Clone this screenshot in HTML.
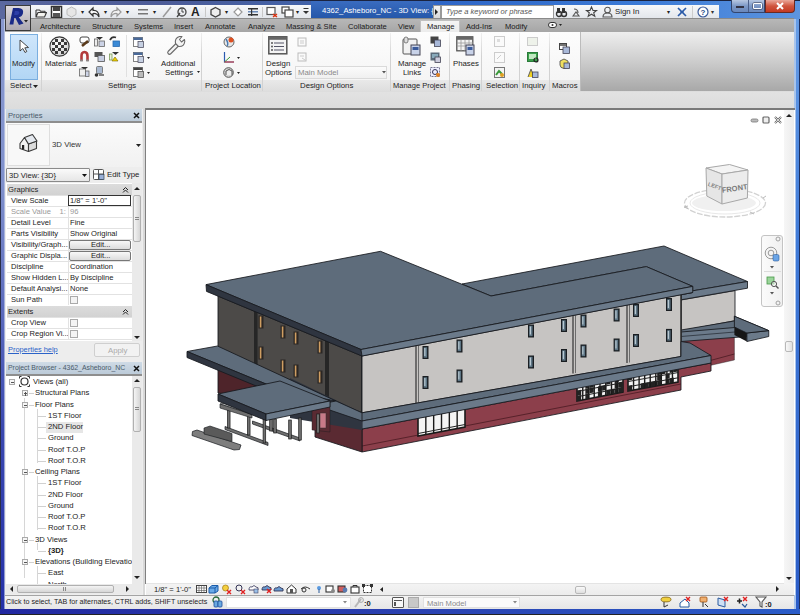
<!DOCTYPE html>
<html><head><meta charset="utf-8">
<style>
*{margin:0;padding:0;box-sizing:border-box}
html,body{width:800px;height:615px;overflow:hidden;background:#4a6aa8;font-family:"Liberation Sans",sans-serif;font-size:7.5px;color:#1e1e1e}
.a{position:absolute}
.t{position:absolute;white-space:nowrap;line-height:1}
svg{overflow:visible}
</style></head><body>
<div class="a" style="left:0px;top:0px;width:800px;height:615px;background:#4a6aa8"></div>
<div class="a" style="left:0px;top:0px;width:6px;height:615px;background:linear-gradient(180deg,#8a9ad0 0,#7f90cc 30%,#3a48b0 70%,#2430a8 100%)"></div>
<div class="a" style="left:0px;top:0px;width:1px;height:615px;background:#2a2f48"></div>
<div class="a" style="left:3.5px;top:19px;width:1.5px;height:590px;background:linear-gradient(180deg,#b8c4e4,#8c98d0)"></div>
<div class="a" style="left:794px;top:0px;width:6px;height:615px;background:linear-gradient(180deg,#6aa0e8 0,#3f7ad8 40%,#2a5cc8 100%)"></div>
<div class="a" style="left:794px;top:19px;width:1.5px;height:590px;background:#a8c4ec"></div>
<div class="a" style="left:799px;top:0px;width:1px;height:615px;background:#1e3060"></div>
<div class="a" style="left:0px;top:0px;width:800px;height:19px;background:linear-gradient(90deg,#5a68a0 0,#4d5c98 20%,#4262a8 38%,#2f66c6 55%,#3b7ad6 80%,#5d95e0 100%)"></div>
<div class="a" style="left:0px;top:0px;width:800px;height:1px;background:#1b2440"></div>
<div class="a" style="left:0px;top:609px;width:800px;height:6px;background:linear-gradient(90deg,#2228a0,#2a40b0 50%,#2a5cc8)"></div>
<div class="a" style="left:0px;top:614px;width:800px;height:1px;background:#222"></div>
<div class="a" style="left:31px;top:5px;width:280px;height:14px;background:linear-gradient(180deg,#f7f8fa,#e2e5ea)"></div>
<svg class="a" style="left:35px;top:7px;" width="12" height="12" viewBox="0 0 12 12"><path d="M1 3 h3.5 l1 1.2 h4.5 v2 M1 3 v7 h8.5 l2-4.5 h-8.5 l-2 4.5" fill="#f4f4f0" stroke="#3a3a3a" stroke-width="1.1" stroke-linejoin="round"/></svg>
<svg class="a" style="left:51px;top:6px;" width="11" height="12" viewBox="0 0 11 12"><rect x="0.5" y="0.5" width="10" height="11" fill="#fff" stroke="#333" stroke-width="1.5"/><rect x="2" y="1" width="7" height="4" fill="#444"/><rect x="2" y="7" width="7" height="4" fill="#555"/></svg>
<svg class="a" style="left:66px;top:6px;" width="11" height="12" viewBox="0 0 11 12"><path d="M5.5 1 L10 3.5 V8.5 L5.5 11 L1 8.5 V3.5Z" fill="#e6e6e6" stroke="#bbb"/></svg>
<div class="t" style="left:81px;top:9px;font-size:6px;color:#222">▾</div>
<svg class="a" style="left:88px;top:6px;" width="12" height="12" viewBox="0 0 12 12"><path d="M5 2 L1 6 L5 10 V7.5 Q9 7 11 11 Q11 4 5 4.5Z" fill="#fff" stroke="#333" stroke-width="1.2"/></svg>
<div class="t" style="left:104px;top:9px;font-size:6px;color:#222">▾</div>
<svg class="a" style="left:110px;top:6px;" width="12" height="12" viewBox="0 0 12 12"><path d="M7 2 L11 6 L7 10 V7.5 Q3 7 1 11 Q1 4 7 4.5Z" fill="#f4f4f4" stroke="#999" stroke-width="1.2"/></svg>
<div class="t" style="left:126px;top:9px;font-size:6px;color:#222">▾</div>
<svg class="a" style="left:137px;top:7px;" width="12" height="10" viewBox="0 0 12 10"><rect x="1" y="2" width="10" height="1.5" fill="#777"/><rect x="1" y="6" width="10" height="1.5" fill="#777"/></svg>
<div class="t" style="left:153px;top:9px;font-size:6px;color:#222">▾</div>
<svg class="a" style="left:162px;top:6px;" width="10" height="12" viewBox="0 0 10 12"><path d="M1 11 L9 1" stroke="#999" stroke-width="1.5"/></svg>
<svg class="a" style="left:176px;top:6px;" width="11" height="12" viewBox="0 0 11 12"><circle cx="6" cy="6" r="4" fill="none" stroke="#444" stroke-width="1.3"/><path d="M6 3 v3 h2" stroke="#444" fill="none"/><path d="M1 11 L4 7" stroke="#444" stroke-width="1.3"/></svg>
<div class="t" style="left:191px;top:6px;font-size:12px;font-weight:bold;color:#222">A</div>
<div class="a" style="left:205px;top:7px;width:1px;height:10px;background:#c8c8c8"></div>
<svg class="a" style="left:210px;top:6px;" width="11" height="12" viewBox="0 0 11 12"><path d="M5.5 1.5 L10 4 V8.5 L5.5 11 L1 8.5 V4Z" fill="#eee" stroke="#444" stroke-width="1.3"/></svg>
<div class="t" style="left:225px;top:9px;font-size:6px;color:#222">▾</div>
<svg class="a" style="left:233px;top:6px;" width="10" height="12" viewBox="0 0 10 12"><path d="M5 2 L9 6 L5 10 L1 6Z" fill="#fff" stroke="#999" stroke-width="1.2"/></svg>
<svg class="a" style="left:247px;top:6px;" width="12" height="12" viewBox="0 0 12 12"><rect x="1" y="2" width="10" height="1.5" fill="#333"/><rect x="1" y="5" width="10" height="1.5" fill="#6a8ab8"/><rect x="1" y="8" width="10" height="1.5" fill="#333"/><rect x="4" y="2" width="1.2" height="8" fill="#333"/></svg>
<div class="a" style="left:262px;top:7px;width:1px;height:10px;background:#c8c8c8"></div>
<svg class="a" style="left:266px;top:6px;" width="12" height="12" viewBox="0 0 12 12"><rect x="1" y="1.5" width="8" height="7" fill="#fff" stroke="#555" stroke-width="1.2"/><path d="M7 8 L11 11 M11 8 L7 11" stroke="#d31" stroke-width="1.5"/></svg>
<svg class="a" style="left:281px;top:6px;" width="13" height="12" viewBox="0 0 13 12"><rect x="1" y="1" width="7" height="6" fill="#fff" stroke="#444" stroke-width="1.2"/><rect x="4" y="4" width="8" height="7" fill="#fff" stroke="#444" stroke-width="1.2"/></svg>
<div class="t" style="left:296px;top:9px;font-size:6px;color:#222">▾</div>
<svg class="a" style="left:303px;top:8px;" width="7" height="8" viewBox="0 0 7 8"><rect x="0.5" y="0" width="5" height="1" fill="#333"/><path d="M0 3 h6 l-3 3z" fill="#333"/></svg>
<div class="a" style="left:311px;top:1px;width:123px;height:18px;background:linear-gradient(180deg,#3a6cc0,#2456a8)"></div>
<div class="t" style="left:322px;top:7px;color:#fff;font-size:7.7px">4362_Asheboro_NC - 3D View: {...</div>
<div class="a" style="left:433px;top:5px;width:8px;height:14px;background:linear-gradient(180deg,#f4f4f4,#d8d8d8);border:1px solid #999"></div>
<svg class="a" style="left:435px;top:9px;" width="4" height="6" viewBox="0 0 4 6"><path d="M0 0 L3 3 L0 6z" fill="#222"/></svg>
<div class="a" style="left:441px;top:5px;width:113px;height:14px;background:#fff;border:1px solid #9a9a9a"></div>
<div class="t" style="left:446px;top:8px;color:#555;font-style:italic;font-size:7.5px">Type a keyword or phrase</div>
<div class="a" style="left:554px;top:5px;width:165px;height:14px;background:linear-gradient(180deg,#f7f8fa,#e2e5ea)"></div>
<svg class="a" style="left:556px;top:7px;" width="11" height="10" viewBox="0 0 11 10"><circle cx="3" cy="7" r="2.5" fill="none" stroke="#333" stroke-width="1.4"/><circle cx="8" cy="7" r="2.5" fill="none" stroke="#333" stroke-width="1.4"/><rect x="1" y="1" width="3" height="5" fill="#333"/><rect x="6" y="1" width="3" height="5" fill="#333"/></svg>
<svg class="a" style="left:571px;top:6px;" width="10" height="12" viewBox="0 0 10 12"><path d="M2 10 L5 6 L8 10Z M3 3 Q7 3 7 7" fill="none" stroke="#555" stroke-width="1.1"/></svg>
<svg class="a" style="left:586px;top:6px;" width="11" height="11" viewBox="0 0 11 11"><path d="M5.5 1 L7 4.5 L10.5 4.5 L7.7 6.8 L8.8 10.2 L5.5 8.2 L2.2 10.2 L3.3 6.8 L0.5 4.5 L4 4.5Z" fill="none" stroke="#444" stroke-width="1.1"/></svg>
<svg class="a" style="left:602px;top:6px;" width="11" height="12" viewBox="0 0 11 12"><circle cx="5.5" cy="4" r="2.8" fill="none" stroke="#555" stroke-width="1.1"/><path d="M1 11 Q1 7 5.5 7 Q10 7 10 11Z" fill="none" stroke="#555" stroke-width="1.1"/></svg>
<div class="t" style="left:615px;top:8px;font-size:7.8px;color:#222">Sign In</div>
<div class="t" style="left:667px;top:9px;font-size:6px;color:#222">▾</div>
<svg class="a" style="left:677px;top:7px;" width="10" height="10" viewBox="0 0 10 10"><path d="M1 1 Q5 5 9 9 M9 1 Q5 5 1 9" stroke="#2a5aa8" stroke-width="1.7" fill="none"/><path d="M3 5 h4" stroke="#2a5aa8" stroke-width="1"/></svg>
<div class="a" style="left:692px;top:6px;width:1px;height:12px;background:#ccc"></div>
<svg class="a" style="left:697px;top:6px;" width="12" height="12" viewBox="0 0 12 12"><circle cx="6" cy="6" r="5" fill="#fff" stroke="#3a5a9a" stroke-width="1.2"/><text x="6" y="9" font-size="8" font-family="Liberation Sans" font-weight="bold" text-anchor="middle" fill="#2a4a8a">?</text></svg>
<div class="t" style="left:711px;top:9px;font-size:6px;color:#333">▾</div>
<div class="a" style="left:731px;top:0px;width:34px;height:13px;border:1px solid #34466e;border-top:0;border-radius:0 0 0 4px;background:linear-gradient(180deg,#b8c8e2,#7c98c6 50%,#6a88bc)"></div>
<div class="a" style="left:748px;top:0px;width:1px;height:12px;background:#4a5e88"></div>
<div class="a" style="left:736px;top:6px;width:8px;height:2px;background:#fff;border:0.5px solid #334"></div>
<div class="a" style="left:753px;top:3px;width:9px;height:6px;border:1.5px solid #fff;border-radius:1px;box-shadow:0 0 0 0.5px #334"></div>
<div class="a" style="left:765px;top:0px;width:30px;height:13px;border:1px solid #6a2a22;border-top:0;border-radius:0 0 4px 0;background:linear-gradient(180deg,#eaa89a,#d0553e 50%,#c23a22)"></div>
<svg class="a" style="left:776px;top:2px;" width="8" height="8" viewBox="0 0 8 8"><path d="M1 1 L7 7 M7 1 L1 7" stroke="#fff" stroke-width="2"/></svg>
<div class="a" style="left:5px;top:18px;width:789px;height:14px;background:linear-gradient(180deg,#b9b9b9,#a6a6a6)"></div>
<div class="a" style="left:31px;top:18px;width:763px;height:1px;background:#8a8a8a"></div>
<div class="a" style="left:420px;top:20px;width:40px;height:12px;background:linear-gradient(180deg,#f4f4f4,#ececec);border:1px solid #c0c0c0;border-bottom:0"></div>
<div class="t" style="left:40px;top:23px;font-size:7.6px;color:#1a1a1a">Architecture</div>
<div class="t" style="left:92px;top:23px;font-size:7.6px;color:#1a1a1a">Structure</div>
<div class="t" style="left:134px;top:23px;font-size:7.6px;color:#1a1a1a">Systems</div>
<div class="t" style="left:174px;top:23px;font-size:7.6px;color:#1a1a1a">Insert</div>
<div class="t" style="left:205px;top:23px;font-size:7.6px;color:#1a1a1a">Annotate</div>
<div class="t" style="left:248px;top:23px;font-size:7.6px;color:#1a1a1a">Analyze</div>
<div class="t" style="left:286px;top:23px;font-size:7.6px;color:#1a1a1a">Massing &amp; Site</div>
<div class="t" style="left:348px;top:23px;font-size:7.6px;color:#1a1a1a">Collaborate</div>
<div class="t" style="left:398px;top:23px;font-size:7.6px;color:#1a1a1a">View</div>
<div class="t" style="left:427px;top:23px;font-size:7.6px;color:#1a1a1a">Manage</div>
<div class="t" style="left:466px;top:23px;font-size:7.6px;color:#1a1a1a">Add-Ins</div>
<div class="t" style="left:505px;top:23px;font-size:7.6px;color:#1a1a1a">Modify</div>
<div class="a" style="left:5px;top:5px;width:26px;height:26px;background:linear-gradient(180deg,#dcd8dc,#aca8b0);border:1px solid #3a3a3a"></div>
<svg class="a" style="left:6.5px;top:6px;" width="22" height="22" viewBox="0 0 22 22"><path d="M2.5 18.5 L6 2 L11.5 2 Q17 2.3 16 7.2 Q15.2 10.5 11.8 11.2 L16.5 17.5 L12 19 L8.4 12 L7.3 12 L6.4 18.5 Z" fill="#1a2a88"/><path d="M7.8 5 L7.2 9 L10 9 Q12.3 8.6 12.4 6.8 Q12.4 5 10.5 5Z" fill="#2d3fa8"/><path d="M17 14 h4 l-2 2.5z" fill="#222"/></svg>
<svg class="a" style="left:548px;top:22px;" width="14" height="7" viewBox="0 0 14 7"><rect x="0.5" y="0.5" width="8" height="5" rx="2.5" fill="#fff" stroke="#333"/><circle cx="4.5" cy="3" r="1" fill="#333"/><path d="M11 2 h3 l-1.5 2z" fill="#222"/></svg>
<div class="a" style="left:5px;top:32px;width:575px;height:59px;background:linear-gradient(180deg,#fdfdfd,#f3f3f3)"></div>
<div class="a" style="left:5px;top:80px;width:575px;height:11px;background:linear-gradient(180deg,#e9e9e9,#dedede)"></div>
<div class="a" style="left:5px;top:91px;width:575px;height:1px;background:#c4c4c4"></div>
<div class="a" style="left:580px;top:32px;width:214px;height:59px;background:linear-gradient(180deg,#eeeeee,#d0d0d0 45%,#a8a8a8)"></div>
<div class="a" style="left:580px;top:32px;width:1px;height:59px;background:#bcbcbc"></div>
<div class="a" style="left:41px;top:33px;width:1px;height:58px;background:linear-gradient(180deg,#f0f0f0,#d2d2d2 40%,#d2d2d2)"></div>
<div class="a" style="left:201px;top:33px;width:1px;height:58px;background:linear-gradient(180deg,#f0f0f0,#d2d2d2 40%,#d2d2d2)"></div>
<div class="a" style="left:262px;top:33px;width:1px;height:58px;background:linear-gradient(180deg,#f0f0f0,#d2d2d2 40%,#d2d2d2)"></div>
<div class="a" style="left:390px;top:33px;width:1px;height:58px;background:linear-gradient(180deg,#f0f0f0,#d2d2d2 40%,#d2d2d2)"></div>
<div class="a" style="left:449px;top:33px;width:1px;height:58px;background:linear-gradient(180deg,#f0f0f0,#d2d2d2 40%,#d2d2d2)"></div>
<div class="a" style="left:481px;top:33px;width:1px;height:58px;background:linear-gradient(180deg,#f0f0f0,#d2d2d2 40%,#d2d2d2)"></div>
<div class="a" style="left:519px;top:33px;width:1px;height:58px;background:linear-gradient(180deg,#f0f0f0,#d2d2d2 40%,#d2d2d2)"></div>
<div class="a" style="left:549px;top:33px;width:1px;height:58px;background:linear-gradient(180deg,#f0f0f0,#d2d2d2 40%,#d2d2d2)"></div>
<div class="a" style="left:10px;top:34px;width:28px;height:46px;background:linear-gradient(180deg,#cfe6fb,#b2d6f5);border:1px solid #7aaedf"></div>
<svg class="a" style="left:19px;top:39px;" width="10" height="14" viewBox="0 0 10 14"><path d="M1 1 L1 12 L3.8 9.5 L6 13.5 L7.8 12.5 L5.8 8.8 L9.5 8.5Z" fill="#fff" stroke="#333" stroke-width="0.9"/></svg>
<div class="t" style="left:12px;top:60px;font-size:7.8px;color:#222">Modify</div>
<div class="t" style="left:10px;top:82px;font-size:7.8px;color:#222">Select</div>
<svg class="a" style="left:33px;top:85px;" width="6" height="3" viewBox="0 0 6 3"><path d="M0 0 h5 l-2.5 3z" fill="#222"/></svg>
<svg class="a" style="left:49px;top:36px;" width="21" height="21" viewBox="0 0 21 21"><defs><radialGradient id="sg" cx="0.4" cy="0.35" r="0.7"><stop offset="0" stop-color="#fff"/><stop offset="1" stop-color="#cfcfcf"/></radialGradient></defs><circle cx="10.5" cy="10.5" r="9.6" fill="url(#sg)" stroke="#333" stroke-width="1.1"/><g fill="#3a3a3a"><rect x="6" y="3" width="3" height="3"/><rect x="12" y="3" width="3" height="3"/><rect x="3" y="6" width="3" height="3"/><rect x="9" y="6" width="3" height="3"/><rect x="15" y="6" width="3" height="3"/><rect x="6" y="9" width="3" height="3"/><rect x="12" y="9" width="3" height="3"/><rect x="3" y="12" width="3" height="3"/><rect x="9" y="12" width="3" height="3"/><rect x="15" y="12" width="3" height="3"/><rect x="6" y="15" width="3" height="3"/><rect x="12" y="15" width="3" height="3"/></g></svg>
<div class="t" style="left:45px;top:60px;font-size:7.8px;color:#222">Materials</div>
<svg class="a" style="left:79px;top:36px;" width="11" height="11" viewBox="0 0 11 11"><rect x="1" y="1" width="9" height="6" rx="2" fill="#fff" stroke="#444"/><path d="M3 10 L9 5" stroke="#5a3a1a" stroke-width="2.5"/></svg>
<svg class="a" style="left:94px;top:36px;" width="11" height="11" viewBox="0 0 11 11"><path d="M2 1 h7 l-3.5 3z" fill="#333"/><rect x="0.5" y="3" width="3" height="7" fill="#eee" stroke="#666" stroke-width="0.8"/><rect x="5" y="5" width="5.5" height="5.5" fill="#ccd3e6" stroke="#666" stroke-width="0.8"/></svg>
<svg class="a" style="left:109px;top:36px;" width="11" height="11" viewBox="0 0 11 11"><path d="M1 4 Q3 0 7 1.5" stroke="#333" stroke-width="1.8" fill="none"/><rect x="4" y="5" width="6.5" height="5.5" fill="#3b8ad6" stroke="#2a6ab0" stroke-width="0.8"/></svg>
<svg class="a" style="left:79px;top:51px;" width="11" height="11" viewBox="0 0 11 11"><path d="M2.5 10 V5 Q2.5 1 5.5 1 Q8.5 1 8.5 5 V10" stroke="#b33a3a" stroke-width="2.6" fill="none"/><rect x="1.2" y="8.5" width="2.6" height="2" fill="#888"/><rect x="7.2" y="8.5" width="2.6" height="2" fill="#888"/></svg>
<svg class="a" style="left:94px;top:51px;" width="11" height="11" viewBox="0 0 11 11"><rect x="0.5" y="1" width="8" height="5" fill="#555"/><rect x="4" y="4.5" width="6.5" height="6" fill="#c8cfe2" stroke="#555" stroke-width="0.8"/></svg>
<svg class="a" style="left:109px;top:51px;" width="11" height="11" viewBox="0 0 11 11"><path d="M3 1 h7 l-3.5 3z" fill="#333"/><rect x="0.5" y="3" width="2.5" height="6" fill="#e8f0d8" stroke="#7a9a5a" stroke-width="0.8"/><path d="M6 6 L9 10 H3Z" fill="#f0d000" stroke="#776600" stroke-width="0.6"/></svg>
<svg class="a" style="left:79px;top:66px;" width="11" height="11" viewBox="0 0 11 11"><path d="M2 1 h7 l-3.5 3z" fill="#333"/><rect x="0.5" y="3" width="6" height="7" fill="#eee" stroke="#666" stroke-width="0.8"/><rect x="6.5" y="5" width="3.5" height="5.5" fill="#ccd3e6" stroke="#666" stroke-width="0.8"/></svg>
<svg class="a" style="left:94px;top:66px;" width="11" height="11" viewBox="0 0 11 11"><rect x="2.5" y="0.5" width="6" height="7" rx="1" fill="#a8b8d0" stroke="#666" stroke-width="0.8"/><circle cx="2.5" cy="9" r="1.8" fill="#333"/><path d="M5 9 h5" stroke="#333" stroke-width="1.2"/></svg>
<div class="a" style="left:126px;top:35px;width:1px;height:42px;background:#e0e0e0"></div>
<svg class="a" style="left:133px;top:37px;" width="11" height="11" viewBox="0 0 11 11"><rect x="0.5" y="0.5" width="9" height="9" fill="#fff" stroke="#666" stroke-width="0.8"/><rect x="0.5" y="0.5" width="9" height="2.5" fill="#4a6a9a"/><rect x="5" y="4.5" width="5.5" height="6" fill="#c6d0e2" stroke="#556" stroke-width="0.8"/></svg>
<svg class="a" style="left:133px;top:52px;" width="11" height="11" viewBox="0 0 11 11"><rect x="0.5" y="0.5" width="9" height="9" fill="#fff" stroke="#666" stroke-width="0.8"/><rect x="0.5" y="0.5" width="9" height="2.5" fill="#4a6a9a"/><rect x="5" y="4.5" width="5.5" height="6" fill="#c6d0e2" stroke="#556" stroke-width="0.8"/></svg>
<svg class="a" style="left:133px;top:67px;" width="11" height="11" viewBox="0 0 11 11"><rect x="0.5" y="0.5" width="9" height="9" fill="#fff" stroke="#666" stroke-width="0.8"/><rect x="0.5" y="0.5" width="9" height="2.5" fill="#444"/><rect x="5" y="4.5" width="5.5" height="6" fill="#bbb" stroke="#555" stroke-width="0.8"/></svg>
<svg class="a" style="left:147px;top:57px;" width="4" height="3" viewBox="0 0 4 3"><path d="M0 0 h3 l-1.5 2z" fill="#222"/></svg>
<svg class="a" style="left:147px;top:72px;" width="4" height="3" viewBox="0 0 4 3"><path d="M0 0 h3 l-1.5 2z" fill="#222"/></svg>
<svg class="a" style="left:166px;top:35px;" width="22" height="21" viewBox="0 0 22 21"><g fill="none" stroke-linecap="round" stroke-linejoin="round"><path d="M3.5 17.5 L11.5 9.5" stroke="#6a6a6a" stroke-width="4.6"/><path d="M3.5 17.5 L11.5 9.5" stroke="#f4f4f4" stroke-width="2.4"/></g><path d="M9.5 8.5 Q8.5 3 13.5 1.5 L16 1.5 L13.5 4.5 L15.5 7 L18.5 4.5 L18.8 6.5 Q18 12 12.5 11.5 Z" fill="#f4f4f4" stroke="#6a6a6a" stroke-width="1.1" stroke-linejoin="round"/></svg>
<div class="t" style="left:161px;top:60px;font-size:7.8px;color:#222">Additional</div>
<div class="t" style="left:165px;top:69px;font-size:7.8px;color:#222">Settings</div>
<svg class="a" style="left:197px;top:71px;" width="4" height="3" viewBox="0 0 4 3"><path d="M0 0 h3 l-1.5 2z" fill="#222"/></svg>
<div class="t" style="left:108px;top:82px;font-size:7.8px;color:#222">Settings</div>
<svg class="a" style="left:223px;top:36px;" width="12" height="12" viewBox="0 0 12 12"><circle cx="6" cy="6" r="5" fill="#e8e8e8" stroke="#666" stroke-width="1"/><path d="M3 3 Q6 8 4 10" stroke="#4a7ab0" stroke-width="1.5" fill="none"/><circle cx="8" cy="4" r="2.5" fill="#e05020"/></svg>
<svg class="a" style="left:223px;top:52px;" width="12" height="11" viewBox="0 0 12 11"><path d="M1.5 0 V10 H11" stroke="#2a5ab0" stroke-width="1.2" fill="none"/><path d="M1.5 10 L7 5" stroke="#3a9a3a" stroke-width="1"/><path d="M1.5 10 H11" stroke="#d03030" stroke-width="1"/></svg>
<svg class="a" style="left:223px;top:67px;" width="12" height="11" viewBox="0 0 12 11"><circle cx="5.5" cy="5.5" r="4.8" fill="#d8d8d8" stroke="#555" stroke-width="1"/><path d="M3 8 L3 4 Q6 1 9 4 L9 8" stroke="#555" fill="#eee"/></svg>
<svg class="a" style="left:237px;top:57px;" width="4" height="3" viewBox="0 0 4 3"><path d="M0 0 h3 l-1.5 2z" fill="#222"/></svg>
<svg class="a" style="left:237px;top:72px;" width="4" height="3" viewBox="0 0 4 3"><path d="M0 0 h3 l-1.5 2z" fill="#222"/></svg>
<div class="t" style="left:205px;top:82px;font-size:7.8px;color:#222">Project Location</div>
<svg class="a" style="left:268px;top:36px;" width="20" height="19" viewBox="0 0 20 19"><rect x="0.8" y="0.8" width="18" height="17" fill="#f4f4f4" stroke="#555" stroke-width="1.5"/><rect x="0.8" y="0.8" width="18" height="3" fill="#666"/><circle cx="4" cy="7" r="1" fill="#555"/><circle cx="4" cy="10.5" r="1" fill="#555"/><circle cx="4" cy="14" r="1" fill="#555"/><path d="M6 7 H16 M6 10.5 H16 M6 14 H16" stroke="#556" stroke-width="1.2"/></svg>
<div class="t" style="left:266px;top:60px;font-size:7.8px;color:#222">Design</div>
<div class="t" style="left:265px;top:69px;font-size:7.8px;color:#222">Options</div>
<svg class="a" style="left:297px;top:37px;" width="10" height="10" viewBox="0 0 10 10"><rect x="1" y="1" width="8" height="8" fill="#fafafa" stroke="#bbb"/><path d="M3 4 h4 M3 6 h4" stroke="#ccc"/></svg>
<svg class="a" style="left:297px;top:52px;" width="10" height="10" viewBox="0 0 10 10"><rect x="1" y="1" width="8" height="8" fill="#fafafa" stroke="#bbb"/><path d="M3 4 h4 M5 6 L8 8" stroke="#ccc"/></svg>
<div class="a" style="left:295px;top:66px;width:92px;height:13px;background:linear-gradient(180deg,#fbfbfb,#f0f0f0);border:1px solid #dadada"></div>
<div class="t" style="left:298px;top:69px;font-size:7.8px;color:#8a8a8a">Main Model</div>
<svg class="a" style="left:382px;top:71px;" width="4" height="3" viewBox="0 0 4 3"><path d="M0 0 h4 l-2 2.5z" fill="#555"/></svg>
<div class="t" style="left:300px;top:82px;font-size:7.8px;color:#222">Design Options</div>
<svg class="a" style="left:401px;top:36px;" width="22" height="20" viewBox="0 0 22 20"><rect x="2" y="3" width="14" height="15" rx="1" fill="#f2f2f2" stroke="#555" stroke-width="1"/><rect x="3" y="1" width="4" height="6" rx="2" fill="#ddd" stroke="#666" stroke-width="0.8"/><rect x="10" y="9" width="9" height="10" fill="#c8d2e8" stroke="#445" stroke-width="1"/><rect x="11.5" y="11" width="6" height="3" fill="#3a5a9a"/></svg>
<div class="t" style="left:398px;top:60px;font-size:7.8px;color:#222">Manage</div>
<div class="t" style="left:403px;top:69px;font-size:7.8px;color:#222">Links</div>
<svg class="a" style="left:430px;top:36px;" width="11" height="11" viewBox="0 0 11 11"><rect x="0.5" y="0.5" width="8" height="7" fill="#444"/><rect x="4.5" y="4" width="6" height="6.5" fill="#a8b8d8" stroke="#445" stroke-width="0.8"/></svg>
<svg class="a" style="left:430px;top:52px;" width="11" height="11" viewBox="0 0 11 11"><rect x="0.5" y="0.5" width="9" height="8" fill="#5a6a7a"/><rect x="2" y="2" width="6" height="4" fill="#8ab"/><rect x="5" y="5" width="5.5" height="5.5" fill="#ccd" stroke="#445" stroke-width="0.8"/></svg>
<svg class="a" style="left:430px;top:67px;" width="11" height="11" viewBox="0 0 11 11"><rect x="0.5" y="0.5" width="9" height="9" fill="#eef" stroke="#557" stroke-width="0.8" stroke-dasharray="2 1"/><circle cx="5" cy="5" r="2.5" fill="none" stroke="#335"/><circle cx="8" cy="8" r="2" fill="#e08020"/></svg>
<div class="t" style="left:393px;top:82px;font-size:7.5px;color:#222">Manage Project</div>
<svg class="a" style="left:456px;top:36px;" width="20" height="20" viewBox="0 0 20 20"><rect x="0.8" y="0.8" width="16" height="14" fill="#f4f4f4" stroke="#555" stroke-width="1.3"/><rect x="0.8" y="0.8" width="16" height="3" fill="#666"/><path d="M1 7 H17 M1 10 H17 M5 4 V15 M9 4 V15 M13 4 V15" stroke="#999" stroke-width="0.8"/><rect x="10" y="9" width="8" height="10" fill="#c8d2e8" stroke="#445" stroke-width="1"/><rect x="11.5" y="11" width="5" height="3" fill="#3a5a9a"/></svg>
<div class="t" style="left:453px;top:60px;font-size:7.8px;color:#222">Phases</div>
<div class="t" style="left:452px;top:82px;font-size:7.8px;color:#222">Phasing</div>
<svg class="a" style="left:494px;top:36px;" width="11" height="11" viewBox="0 0 11 11"><rect x="0.5" y="0.5" width="10" height="10" fill="#fafafa" stroke="#ccc"/><path d="M3 3 h3 v3 h-3z" fill="#ddd"/></svg>
<svg class="a" style="left:494px;top:52px;" width="11" height="11" viewBox="0 0 11 11"><rect x="0.5" y="0.5" width="10" height="10" fill="#fafafa" stroke="#ccc"/><path d="M3 7 L7 3" stroke="#ccc"/></svg>
<svg class="a" style="left:494px;top:67px;" width="11" height="11" viewBox="0 0 11 11"><rect x="0.5" y="0.5" width="10" height="10" fill="#f4f4f4" stroke="#777"/><path d="M2 8 L5 4 L8 7" stroke="#3a9a3a" stroke-width="2" fill="none"/><circle cx="8" cy="8" r="2" fill="#e0a020"/></svg>
<div class="t" style="left:486px;top:82px;font-size:7.8px;color:#222">Selection</div>
<svg class="a" style="left:527px;top:36px;" width="11" height="11" viewBox="0 0 11 11"><rect x="0.5" y="1.5" width="10" height="8" fill="#eef2ea" stroke="#ccc"/></svg>
<svg class="a" style="left:527px;top:52px;" width="12" height="11" viewBox="0 0 12 11"><rect x="0.5" y="0.5" width="10" height="9" fill="#3aa04a" stroke="#2a7a3a"/><rect x="2" y="2" width="7" height="5" fill="#bfe8c0"/><circle cx="9" cy="8" r="2" fill="none" stroke="#222" stroke-width="1.2"/></svg>
<svg class="a" style="left:527px;top:67px;" width="12" height="11" viewBox="0 0 12 11"><path d="M1 10 L4 2 L7 10" fill="#f0d020" stroke="#555" stroke-width="0.9"/><rect x="5.5" y="5" width="5.5" height="5.5" fill="#a8b8d8" stroke="#445" stroke-width="0.8"/></svg>
<div class="t" style="left:522px;top:82px;font-size:7.8px;color:#222">Inquiry</div>
<svg class="a" style="left:559px;top:43px;" width="11" height="11" viewBox="0 0 11 11"><rect x="0.5" y="0.5" width="7" height="6" fill="#fff" stroke="#444"/><path d="M1 2 h6" stroke="#444" stroke-width="1.5"/><rect x="4" y="4" width="6.5" height="6.5" fill="#a8b8d8" stroke="#445" stroke-width="0.8"/></svg>
<svg class="a" style="left:559px;top:58px;" width="11" height="11" viewBox="0 0 11 11"><path d="M5 1 L9 3 V7 Q9 10 5 10.5 Q1 10 1 7 V3Z" fill="#f0e060" stroke="#555" stroke-width="0.9"/><rect x="5" y="5" width="5.5" height="5.5" fill="#a8b8d8" stroke="#445" stroke-width="0.8"/></svg>
<div class="t" style="left:552px;top:82px;font-size:7.8px;color:#222">Macros</div>
<div class="a" style="left:5px;top:91px;width:789px;height:18px;background:linear-gradient(180deg,#d8d8d8 0,#e2e2e2 1px,#dcdcdc)"></div>
<div class="a" style="left:5px;top:109px;width:139px;height:486px;background:#ededed"></div>
<div class="a" style="left:143px;top:109px;width:2px;height:486px;background:#d8d8d8"></div>
<div class="a" style="left:6px;top:109px;width:136px;height:12px;background:linear-gradient(180deg,#cfdbe6,#bccbd9)"></div>
<div class="t" style="left:8px;top:112px;font-size:7.6px;color:#4a5a6a">Properties</div>
<svg class="a" style="left:133px;top:112px;" width="7" height="7" viewBox="0 0 7 7"><path d="M1 1 L6 6 M6 1 L1 6" stroke="#111" stroke-width="1.5"/></svg>
<div class="a" style="left:6px;top:121px;width:136px;height:2px;background:#8e8e8e"></div>
<div class="a" style="left:6px;top:123px;width:136px;height:44px;background:linear-gradient(180deg,#fbfbfb,#f1f1f1)"></div>
<div class="a" style="left:7px;top:124px;width:43px;height:42px;background:#f8f8f8;border:1px solid #dedede"></div>
<svg class="a" style="left:18px;top:133px;" width="21" height="21" viewBox="0 0 21 21"><g stroke="#3a3a3a" stroke-width="1.1" stroke-linejoin="round"><path d="M2 10.5 L6.5 4.5 L10.5 11 L10.5 18.5 L2 15.5 Z" fill="#f2f2f2"/><path d="M10.5 11 L18.5 8 L18.5 15.5 L10.5 18.5 Z" fill="#dcdcdc"/><path d="M6.5 4.5 L14.5 1.5 L19 8 L10.5 11 Z" fill="#e4e8ee"/></g><rect x="4" y="12" width="2.2" height="4.5" fill="#222"/></svg>
<div class="t" style="left:52px;top:141px;font-size:7.8px;color:#333">3D View</div>
<svg class="a" style="left:136px;top:144px;" width="5" height="3" viewBox="0 0 5 3"><path d="M0 0 h5 l-2.5 3z" fill="#222"/></svg>
<div class="a" style="left:6px;top:168px;width:84px;height:14px;background:linear-gradient(180deg,#fafafa,#e6e6e6);border:1px solid #8a8a8a;border-radius:1px"></div>
<div class="t" style="left:9px;top:172px;font-size:7.6px;color:#222">3D View: {3D}</div>
<svg class="a" style="left:82px;top:174px;" width="5" height="3" viewBox="0 0 5 3"><path d="M0 0 h5 l-2.5 3z" fill="#111"/></svg>
<svg class="a" style="left:93px;top:169px;" width="12" height="12" viewBox="0 0 12 12"><rect x="0.5" y="0.5" width="10" height="10" rx="1" fill="#fff" stroke="#555"/><path d="M5.5 0.5 V10.5 M0.5 5 H10.5" stroke="#555"/><rect x="6" y="5.5" width="5" height="5" fill="#9ab0d8" stroke="#345" stroke-width="0.7"/></svg>
<div class="t" style="left:107px;top:171px;font-size:7.8px;color:#222">Edit Type</div>
<div class="a" style="left:6px;top:183px;width:126px;height:158px;background:#fff"></div>
<div class="a" style="left:7px;top:184px;width:125px;height:11px;background:linear-gradient(180deg,#dcdcdc,#d2d2d2)"></div>
<div class="t" style="left:8px;top:186px;font-size:7.6px;color:#222">Graphics</div>
<svg class="a" style="left:123px;top:187px;" width="5" height="6" viewBox="0 0 5 6"><path d="M0 3 L2.5 0.5 L5 3 M0 5.5 L2.5 3 L5 5.5" stroke="#222" stroke-width="1" fill="none"/></svg>
<div class="a" style="left:7px;top:195px;width:125px;height:1px;background:#e2e2e2"></div>
<div class="t" style="left:11px;top:197px;font-size:7.6px;color:#222">View Scale</div>
<div class="a" style="left:68px;top:195px;width:1px;height:11px;background:#e2e2e2"></div>
<div class="t" style="left:70px;top:197px;font-size:7.6px;color:#222">1/8&quot; = 1'-0&quot;</div>
<div class="a" style="left:7px;top:206px;width:125px;height:1px;background:#e2e2e2"></div>
<div class="t" style="left:11px;top:208px;font-size:7.6px;color:#999">Scale Value &nbsp;&nbsp; 1:</div>
<div class="a" style="left:68px;top:206px;width:1px;height:11px;background:#e2e2e2"></div>
<div class="t" style="left:70px;top:208px;font-size:7.6px;color:#999">96</div>
<div class="a" style="left:7px;top:217px;width:125px;height:1px;background:#e2e2e2"></div>
<div class="t" style="left:11px;top:219px;font-size:7.6px;color:#222">Detail Level</div>
<div class="a" style="left:68px;top:217px;width:1px;height:11px;background:#e2e2e2"></div>
<div class="t" style="left:70px;top:219px;font-size:7.6px;color:#222">Fine</div>
<div class="a" style="left:7px;top:228px;width:125px;height:1px;background:#e2e2e2"></div>
<div class="t" style="left:11px;top:230px;font-size:7.6px;color:#222">Parts Visibility</div>
<div class="a" style="left:68px;top:228px;width:1px;height:11px;background:#e2e2e2"></div>
<div class="t" style="left:70px;top:230px;font-size:7.6px;color:#222">Show Original</div>
<div class="a" style="left:7px;top:239px;width:125px;height:1px;background:#e2e2e2"></div>
<div class="t" style="left:11px;top:241px;font-size:7.6px;color:#222">Visibility/Graph...</div>
<div class="a" style="left:68px;top:239px;width:1px;height:11px;background:#e2e2e2"></div>
<div class="a" style="left:69px;top:240px;width:62px;height:10px;background:linear-gradient(180deg,#f8f8f8,#dcdcdc);border:1px solid #777;border-radius:2px"></div>
<div class="t" style="left:91px;top:241px;font-size:7.6px;color:#222">Edit...</div>
<div class="a" style="left:7px;top:250px;width:125px;height:1px;background:#e2e2e2"></div>
<div class="t" style="left:11px;top:252px;font-size:7.6px;color:#222">Graphic Displa...</div>
<div class="a" style="left:68px;top:250px;width:1px;height:11px;background:#e2e2e2"></div>
<div class="a" style="left:69px;top:251px;width:62px;height:10px;background:linear-gradient(180deg,#f8f8f8,#dcdcdc);border:1px solid #777;border-radius:2px"></div>
<div class="t" style="left:91px;top:252px;font-size:7.6px;color:#222">Edit...</div>
<div class="a" style="left:7px;top:261px;width:125px;height:1px;background:#e2e2e2"></div>
<div class="t" style="left:11px;top:263px;font-size:7.6px;color:#222">Discipline</div>
<div class="a" style="left:68px;top:261px;width:1px;height:11px;background:#e2e2e2"></div>
<div class="t" style="left:70px;top:263px;font-size:7.6px;color:#222">Coordination</div>
<div class="a" style="left:7px;top:272px;width:125px;height:1px;background:#e2e2e2"></div>
<div class="t" style="left:11px;top:274px;font-size:7.6px;color:#222">Show Hidden L...</div>
<div class="a" style="left:68px;top:272px;width:1px;height:11px;background:#e2e2e2"></div>
<div class="t" style="left:70px;top:274px;font-size:7.6px;color:#222">By Discipline</div>
<div class="a" style="left:7px;top:283px;width:125px;height:1px;background:#e2e2e2"></div>
<div class="t" style="left:11px;top:285px;font-size:7.6px;color:#222">Default Analysi...</div>
<div class="a" style="left:68px;top:283px;width:1px;height:11px;background:#e2e2e2"></div>
<div class="t" style="left:70px;top:285px;font-size:7.6px;color:#222">None</div>
<div class="a" style="left:7px;top:294px;width:125px;height:1px;background:#e2e2e2"></div>
<div class="t" style="left:11px;top:296px;font-size:7.6px;color:#222">Sun Path</div>
<div class="a" style="left:68px;top:294px;width:1px;height:11px;background:#e2e2e2"></div>
<div class="a" style="left:70px;top:296px;width:8px;height:8px;background:#f4f4f4;border:1px solid #aaa"></div>
<div class="a" style="left:68px;top:195px;width:63px;height:11px;border:1.5px solid #333;background:transparent"></div>
<div class="a" style="left:7px;top:306px;width:125px;height:11px;background:linear-gradient(180deg,#dcdcdc,#d2d2d2)"></div>
<div class="t" style="left:8px;top:308px;font-size:7.6px;color:#222">Extents</div>
<svg class="a" style="left:123px;top:309px;" width="5" height="6" viewBox="0 0 5 6"><path d="M0 3 L2.5 0.5 L5 3 M0 5.5 L2.5 3 L5 5.5" stroke="#222" stroke-width="1" fill="none"/></svg>
<div class="a" style="left:7px;top:317px;width:125px;height:1px;background:#e2e2e2"></div>
<div class="t" style="left:11px;top:319px;font-size:7.6px;color:#222">Crop View</div>
<div class="a" style="left:68px;top:317px;width:1px;height:11px;background:#e2e2e2"></div>
<div class="a" style="left:70px;top:319px;width:8px;height:8px;background:#f4f4f4;border:1px solid #aaa"></div>
<div class="a" style="left:7px;top:328px;width:125px;height:1px;background:#e2e2e2"></div>
<div class="t" style="left:11px;top:330px;font-size:7.6px;color:#222">Crop Region Vi...</div>
<div class="a" style="left:68px;top:328px;width:1px;height:11px;background:#e2e2e2"></div>
<div class="a" style="left:70px;top:330px;width:8px;height:8px;background:#f4f4f4;border:1px solid #aaa"></div>
<div class="a" style="left:7px;top:339px;width:125px;height:1px;background:#e2e2e2"></div>
<div class="a" style="left:132px;top:183px;width:10px;height:158px;background:#eaeaea"></div>
<svg class="a" style="left:134px;top:187px;" width="6" height="4" viewBox="0 0 6 4"><path d="M0 3 L3 0 L6 3z" fill="#222"/></svg>
<div class="a" style="left:133px;top:195px;width:8px;height:47px;background:linear-gradient(90deg,#f4f4f4,#d6d6d6);border:1px solid #b0b0b0;border-radius:2px"></div>
<div class="a" style="left:135px;top:217px;width:4px;height:3px;border-top:1px solid #888;border-bottom:1px solid #888"></div>
<svg class="a" style="left:134px;top:336px;" width="6" height="4" viewBox="0 0 6 4"><path d="M0 0 L6 0 L3 3z" fill="#222"/></svg>
<div class="t" style="left:8px;top:346px;font-size:7.4px;color:#2a62c8;text-decoration:underline">Properties help</div>
<div class="a" style="left:94px;top:343px;width:46px;height:14px;background:#f2f2f2;border:1px solid #cfcfcf;border-radius:2px"></div>
<div class="t" style="left:108px;top:347px;font-size:7.8px;color:#aaa">Apply</div>
<div class="a" style="left:6px;top:362px;width:136px;height:12px;background:linear-gradient(180deg,#cfdbe6,#bccbd9)"></div>
<div class="t" style="left:8px;top:365px;font-size:6.9px;color:#4a5a6a">Project Browser - 4362_Asheboro_NC</div>
<svg class="a" style="left:133px;top:365px;" width="7" height="7" viewBox="0 0 7 7"><path d="M1 1 L6 6 M6 1 L1 6" stroke="#111" stroke-width="1.5"/></svg>
<div class="a" style="left:6px;top:374px;width:136px;height:2px;background:#8e8e8e"></div>
<div class="a" style="left:6px;top:376px;width:126px;height:208px;background:#fff"></div>
<div class="a" style="left:24px;top:398px;width:1px;height:180px;background:#d6d6d6"></div>
<div class="a" style="left:37px;top:409px;width:1px;height:54px;background:#d6d6d6"></div>
<div class="a" style="left:37px;top:476px;width:1px;height:54px;background:#d6d6d6"></div>
<div class="a" style="left:37px;top:543px;width:1px;height:7px;background:#d6d6d6"></div>
<div class="a" style="left:37px;top:566px;width:1px;height:20px;background:#d6d6d6"></div>
<div class="a" style="left:9px;top:379px;width:6px;height:6px;border:1px solid #aaa;background:#f6f6f6"></div>
<div class="a" style="left:10.5px;top:382px;width:3px;height:1px;background:#555"></div>
<svg class="a" style="left:19px;top:376px;" width="11" height="11" viewBox="0 0 11 11"><circle cx="5.5" cy="5.5" r="3.5" fill="none" stroke="#333" stroke-width="1.2"/><path d="M0.5 2.5 V0.5 H2.5 M8.5 0.5 H10.5 V2.5 M10.5 8.5 V10.5 H8.5 M2.5 10.5 H0.5 V8.5" stroke="#333" fill="none" stroke-width="1"/></svg>
<div class="t" style="left:33px;top:378px;font-size:7.7px;color:#222">Views (all)</div>
<div class="a" style="left:22px;top:390.25px;width:6px;height:6px;border:1px solid #aaa;background:#f6f6f6"></div>
<div class="a" style="left:23.5px;top:393.25px;width:3px;height:1px;background:#555"></div>
<div class="a" style="left:24.5px;top:391.75px;width:1px;height:4px;background:#555"></div>
<div class="a" style="left:29px;top:393.25px;width:5px;height:1px;background:#d0d0d0"></div>
<div class="t" style="left:35px;top:389.25px;font-size:7.7px;color:#222">Structural Plans</div>
<div class="a" style="left:22px;top:401.5px;width:6px;height:6px;border:1px solid #aaa;background:#f6f6f6"></div>
<div class="a" style="left:23.5px;top:404.5px;width:3px;height:1px;background:#555"></div>
<div class="a" style="left:29px;top:404.5px;width:5px;height:1px;background:#d0d0d0"></div>
<div class="t" style="left:35px;top:400.5px;font-size:7.7px;color:#222">Floor Plans</div>
<div class="a" style="left:38px;top:415.75px;width:8px;height:1px;background:#d0d0d0"></div>
<div class="t" style="left:48px;top:411.75px;font-size:7.7px;color:#222">1ST Floor</div>
<div class="a" style="left:38px;top:427.0px;width:8px;height:1px;background:#d0d0d0"></div>
<div class="a" style="left:46px;top:422.0px;width:37px;height:11px;background:#e6e6e6"></div>
<div class="t" style="left:48px;top:423.0px;font-size:7.7px;color:#222">2ND Floor</div>
<div class="a" style="left:38px;top:438.25px;width:8px;height:1px;background:#d0d0d0"></div>
<div class="t" style="left:48px;top:434.25px;font-size:7.7px;color:#222">Ground</div>
<div class="a" style="left:38px;top:449.5px;width:8px;height:1px;background:#d0d0d0"></div>
<div class="t" style="left:48px;top:445.5px;font-size:7.7px;color:#222">Roof T.O.P</div>
<div class="a" style="left:38px;top:460.75px;width:8px;height:1px;background:#d0d0d0"></div>
<div class="t" style="left:48px;top:456.75px;font-size:7.7px;color:#222">Roof T.O.R</div>
<div class="a" style="left:22px;top:469.0px;width:6px;height:6px;border:1px solid #aaa;background:#f6f6f6"></div>
<div class="a" style="left:23.5px;top:472.0px;width:3px;height:1px;background:#555"></div>
<div class="a" style="left:29px;top:472.0px;width:5px;height:1px;background:#d0d0d0"></div>
<div class="t" style="left:35px;top:468.0px;font-size:7.7px;color:#222">Ceiling Plans</div>
<div class="a" style="left:38px;top:483.25px;width:8px;height:1px;background:#d0d0d0"></div>
<div class="t" style="left:48px;top:479.25px;font-size:7.7px;color:#222">1ST Floor</div>
<div class="a" style="left:38px;top:494.5px;width:8px;height:1px;background:#d0d0d0"></div>
<div class="t" style="left:48px;top:490.5px;font-size:7.7px;color:#222">2ND Floor</div>
<div class="a" style="left:38px;top:505.75px;width:8px;height:1px;background:#d0d0d0"></div>
<div class="t" style="left:48px;top:501.75px;font-size:7.7px;color:#222">Ground</div>
<div class="a" style="left:38px;top:517.0px;width:8px;height:1px;background:#d0d0d0"></div>
<div class="t" style="left:48px;top:513.0px;font-size:7.7px;color:#222">Roof T.O.P</div>
<div class="a" style="left:38px;top:528.25px;width:8px;height:1px;background:#d0d0d0"></div>
<div class="t" style="left:48px;top:524.25px;font-size:7.7px;color:#222">Roof T.O.R</div>
<div class="a" style="left:22px;top:536.5px;width:6px;height:6px;border:1px solid #aaa;background:#f6f6f6"></div>
<div class="a" style="left:23.5px;top:539.5px;width:3px;height:1px;background:#555"></div>
<div class="a" style="left:29px;top:539.5px;width:5px;height:1px;background:#d0d0d0"></div>
<div class="t" style="left:35px;top:535.5px;font-size:7.7px;color:#222">3D Views</div>
<div class="a" style="left:38px;top:550.75px;width:8px;height:1px;background:#d0d0d0"></div>
<div class="t" style="left:48px;top:546.75px;font-size:7.7px;color:#222;font-weight:bold">{3D}</div>
<div class="a" style="left:22px;top:559.0px;width:6px;height:6px;border:1px solid #aaa;background:#f6f6f6"></div>
<div class="a" style="left:23.5px;top:562.0px;width:3px;height:1px;background:#555"></div>
<div class="a" style="left:29px;top:562.0px;width:5px;height:1px;background:#d0d0d0"></div>
<div class="t" style="left:35px;top:558.0px;font-size:7.7px;color:#222">Elevations (Building Elevation</div>
<div class="a" style="left:38px;top:573.25px;width:8px;height:1px;background:#d0d0d0"></div>
<div class="t" style="left:48px;top:569.25px;font-size:7.7px;color:#222">East</div>
<div class="a" style="left:38px;top:584.5px;width:8px;height:1px;background:#d0d0d0"></div>
<div class="t" style="left:48px;top:580.5px;font-size:7.7px;color:#222">North</div>
<div class="a" style="left:132px;top:376px;width:10px;height:208px;background:#eaeaea"></div>
<svg class="a" style="left:134px;top:379px;" width="6" height="4" viewBox="0 0 6 4"><path d="M0 3 L3 0 L6 3z" fill="#222"/></svg>
<div class="a" style="left:133px;top:387px;width:8px;height:45px;background:linear-gradient(90deg,#f4f4f4,#d6d6d6);border:1px solid #b0b0b0;border-radius:2px"></div>
<div class="a" style="left:135px;top:407px;width:4px;height:3px;border-top:1px solid #888;border-bottom:1px solid #888"></div>
<svg class="a" style="left:134px;top:576px;" width="6" height="4" viewBox="0 0 6 4"><path d="M0 0 L6 0 L3 3z" fill="#222"/></svg>
<div class="a" style="left:6px;top:584px;width:136px;height:10px;background:#eaeaea"></div>
<svg class="a" style="left:10px;top:586px;" width="4" height="6" viewBox="0 0 4 6"><path d="M3 0 L0 3 L3 6z" fill="#222"/></svg>
<div class="a" style="left:17px;top:585px;width:97px;height:8px;background:linear-gradient(180deg,#f4f4f4,#d6d6d6);border:1px solid #b0b0b0;border-radius:2px"></div>
<div class="a" style="left:63px;top:587px;width:3px;height:4px;border-left:1px solid #888;border-right:1px solid #888"></div>
<svg class="a" style="left:126px;top:586px;" width="4" height="6" viewBox="0 0 4 6"><path d="M0 0 L3 3 L0 6z" fill="#222"/></svg>
<div class="a" style="left:145px;top:108px;width:650px;height:487px;background:#fff"></div>
<div class="a" style="left:144.5px;top:108px;width:650px;height:1.5px;background:#7a7a7a"></div>
<div class="a" style="left:144.5px;top:108px;width:1.5px;height:476px;background:#808080"></div>
<div class="a" style="left:784px;top:110px;width:10px;height:474px;background:linear-gradient(90deg,#f6f6f6,#ececec)"></div>
<svg class="a" style="left:786px;top:114px;" width="6" height="4" viewBox="0 0 6 4"><path d="M0 3 L3 0 L6 3z" fill="#222"/></svg>
<div class="a" style="left:785px;top:341px;width:8px;height:11px;background:linear-gradient(90deg,#f8f8f8,#e0e0e0);border:1px solid #b8b8b8;border-radius:2px"></div>
<svg class="a" style="left:786px;top:577px;" width="6" height="4" viewBox="0 0 6 4"><path d="M0 0 L6 0 L3 3z" fill="#222"/></svg>
<div class="a" style="left:146px;top:583px;width:648px;height:12px;background:linear-gradient(180deg,#f4f4f4,#ececec)"></div>
<div class="a" style="left:146px;top:583px;width:638px;height:1px;background:#e4e4e4"></div>
<div class="a" style="left:575px;top:586px;width:11px;height:8px;background:linear-gradient(180deg,#fafafa,#dedede);border:1px solid #b8b8b8;border-radius:2px"></div>
<svg class="a" style="left:776px;top:586px;" width="4" height="6" viewBox="0 0 4 6"><path d="M0 0 L3 3 L0 6z" fill="#222"/></svg>
<div class="t" style="left:154px;top:586px;font-size:7.6px;color:#222">1/8&quot; = 1'-0&quot;</div>
<svg class="a" style="left:0;top:0" width="800" height="615" viewBox="0 0 800 615"><polygon points="681,300 735,290.6 735,320.6 681,331" fill="#c6c4c2" stroke="#16191d" stroke-width="0.85" stroke-linejoin="round"/><polygon points="681,341.5 734.4,336 734.4,360 681,372" fill="#8c3f4b" stroke="#16191d" stroke-width="0.4" stroke-linejoin="round"/><line x1="690" y1="366" x2="734.4" y2="354" stroke="#4a1a22" stroke-width="0.8"/><polygon points="681,330 734.4,321 734.4,316.25 768.75,330.6 746.9,333 681,333" fill="#5e6c7b" stroke="#16191d" stroke-width="0.85" stroke-linejoin="round"/><polygon points="681,332 746.9,326.5 746.9,336.5 681,341.5" fill="#6b7a8a" stroke="#16191d" stroke-width="0.85" stroke-linejoin="round"/><line x1="681" y1="336.5" x2="746.9" y2="331" stroke="#2a3038" stroke-width="0.8"/><polygon points="734.4,327 746.9,333 746.9,341.5 734.4,335" fill="#161616" stroke="#16191d" stroke-width="0" stroke-linejoin="round"/><polygon points="746.9,333 768.75,330.6 768.75,336.5 746.9,341.5" fill="#6b7a8a" stroke="#16191d" stroke-width="0.85" stroke-linejoin="round"/><polygon points="734.4,316.25 768.75,330.6 746.9,333 734.4,327" fill="#5e6c7b" stroke="#16191d" stroke-width="0.85" stroke-linejoin="round"/><polygon points="462,284 664,246 747.5,281.5 692.7,290.8 692.7,286.4 646.3,266.6 491,296" fill="#5e6c7b" stroke="#16191d" stroke-width="0.85" stroke-linejoin="round"/><polygon points="681,292.8 747.5,281.5 747.5,288.2 681,299.8" fill="#6b7a8a" stroke="#16191d" stroke-width="0.85" stroke-linejoin="round"/><polygon points="218,296 362,356 362,413 218,349" fill="#4c4a48" stroke="#16191d" stroke-width="0.85" stroke-linejoin="round"/><rect x="254" y="310" width="3.2" height="58" fill="#262626" transform="skewY(0)"/><polygon points="254,310 257.5,311.5 257.5,367 254,365.5" fill="#262626" stroke="#16191d" stroke-width="0" stroke-linejoin="round"/><polygon points="325,340 329,341.5 329,398 325,396.5" fill="#262626" stroke="#16191d" stroke-width="0" stroke-linejoin="round"/><rect x="258.5" y="315.5" width="5" height="13" fill="#2a2624"/><rect x="259.8" y="316.5" width="1.6" height="11" fill="#cf9e62"/><rect x="280.5" y="325.5" width="5" height="13" fill="#2a2624"/><rect x="281.8" y="326.5" width="1.6" height="11" fill="#cf9e62"/><rect x="293.5" y="331.5" width="5" height="13" fill="#2a2624"/><rect x="294.8" y="332.5" width="1.6" height="11" fill="#cf9e62"/><rect x="317.5" y="340.5" width="5" height="13" fill="#2a2624"/><rect x="318.8" y="341.5" width="1.6" height="11" fill="#cf9e62"/><rect x="258.5" y="346.5" width="5" height="13" fill="#2a2624"/><rect x="259.8" y="347.5" width="1.6" height="11" fill="#cf9e62"/><rect x="280.5" y="359.5" width="5" height="13" fill="#2a2624"/><rect x="281.8" y="360.5" width="1.6" height="11" fill="#cf9e62"/><rect x="293.5" y="364.5" width="5" height="13" fill="#2a2624"/><rect x="294.8" y="365.5" width="1.6" height="11" fill="#cf9e62"/><rect x="317.5" y="370.5" width="5" height="13" fill="#2a2624"/><rect x="318.8" y="371.5" width="1.6" height="11" fill="#cf9e62"/><polygon points="362,356 692.7,292.5 681,294.5 681,356.5 362,412.8" fill="#c6c4c2" stroke="#16191d" stroke-width="0.85" stroke-linejoin="round"/><polygon points="362,356 681,294.7 681,356.5 362,412.8" fill="#c6c4c2" stroke="#16191d" stroke-width="0.85" stroke-linejoin="round"/><line x1="416" y1="345.5" x2="416" y2="403.5" stroke="#333" stroke-width="1.2"/><line x1="418.5" y1="345.0" x2="418.5" y2="403.0" stroke="#555" stroke-width="0.8"/><line x1="573" y1="315.5" x2="573" y2="373.5" stroke="#333" stroke-width="1.2"/><line x1="575.5" y1="315.0" x2="575.5" y2="373.0" stroke="#555" stroke-width="0.8"/><line x1="627" y1="305" x2="627" y2="363" stroke="#333" stroke-width="1.2"/><line x1="629.5" y1="304.5" x2="629.5" y2="362.5" stroke="#555" stroke-width="0.8"/><line x1="681" y1="294.7" x2="681" y2="356.5" stroke="#333" stroke-width="1.2"/><rect x="422.5" y="346.0" width="6" height="13" fill="#1a1e22"/><rect x="423.7" y="347.3" width="3.4" height="10.4" fill="#5d7584"/><rect x="424.3" y="348.0" width="1.1" height="8" fill="#c4d2da"/><rect x="456.5" y="339.5" width="6" height="13" fill="#1a1e22"/><rect x="457.7" y="340.8" width="3.4" height="10.4" fill="#5d7584"/><rect x="458.3" y="341.5" width="1.1" height="8" fill="#c4d2da"/><rect x="528" y="324.5" width="6" height="13" fill="#1a1e22"/><rect x="529.2" y="325.8" width="3.4" height="10.4" fill="#5d7584"/><rect x="529.8" y="326.5" width="1.1" height="8" fill="#c4d2da"/><rect x="561" y="319.0" width="6" height="13" fill="#1a1e22"/><rect x="562.2" y="320.3" width="3.4" height="10.4" fill="#5d7584"/><rect x="562.8" y="321.0" width="1.1" height="8" fill="#c4d2da"/><rect x="580.5" y="314.5" width="6" height="13" fill="#1a1e22"/><rect x="581.7" y="315.8" width="3.4" height="10.4" fill="#5d7584"/><rect x="582.3" y="316.5" width="1.1" height="8" fill="#c4d2da"/><rect x="613.6" y="308.5" width="6" height="13" fill="#1a1e22"/><rect x="614.8000000000001" y="309.8" width="3.4" height="10.4" fill="#5d7584"/><rect x="615.4" y="310.5" width="1.1" height="8" fill="#c4d2da"/><rect x="633" y="304.0" width="6" height="13" fill="#1a1e22"/><rect x="634.2" y="305.3" width="3.4" height="10.4" fill="#5d7584"/><rect x="634.8" y="306.0" width="1.1" height="8" fill="#c4d2da"/><rect x="666" y="298.0" width="6" height="13" fill="#1a1e22"/><rect x="667.2" y="299.3" width="3.4" height="10.4" fill="#5d7584"/><rect x="667.8" y="300.0" width="1.1" height="8" fill="#c4d2da"/><rect x="422.5" y="376.0" width="6" height="13" fill="#1a1e22"/><rect x="423.7" y="377.3" width="3.4" height="10.4" fill="#5d7584"/><rect x="424.3" y="378.0" width="1.1" height="8" fill="#c4d2da"/><rect x="456.5" y="369.5" width="6" height="13" fill="#1a1e22"/><rect x="457.7" y="370.8" width="3.4" height="10.4" fill="#5d7584"/><rect x="458.3" y="371.5" width="1.1" height="8" fill="#c4d2da"/><rect x="528" y="355.5" width="6" height="13" fill="#1a1e22"/><rect x="529.2" y="356.8" width="3.4" height="10.4" fill="#5d7584"/><rect x="529.8" y="357.5" width="1.1" height="8" fill="#c4d2da"/><rect x="561" y="349.0" width="6" height="13" fill="#1a1e22"/><rect x="562.2" y="350.3" width="3.4" height="10.4" fill="#5d7584"/><rect x="562.8" y="351.0" width="1.1" height="8" fill="#c4d2da"/><rect x="580.5" y="344.5" width="6" height="13" fill="#1a1e22"/><rect x="581.7" y="345.8" width="3.4" height="10.4" fill="#5d7584"/><rect x="582.3" y="346.5" width="1.1" height="8" fill="#c4d2da"/><rect x="613.6" y="338.5" width="6" height="13" fill="#1a1e22"/><rect x="614.8000000000001" y="339.8" width="3.4" height="10.4" fill="#5d7584"/><rect x="615.4" y="340.5" width="1.1" height="8" fill="#c4d2da"/><rect x="633" y="334.0" width="6" height="13" fill="#1a1e22"/><rect x="634.2" y="335.3" width="3.4" height="10.4" fill="#5d7584"/><rect x="634.8" y="336.0" width="1.1" height="8" fill="#c4d2da"/><rect x="666" y="328.9" width="6" height="13" fill="#1a1e22"/><rect x="667.2" y="330.2" width="3.4" height="10.4" fill="#5d7584"/><rect x="667.8" y="330.9" width="1.1" height="8" fill="#c4d2da"/><polygon points="206,284.6 380.5,251.3 491,296 646.3,266.6 692.7,286.4 361,349.5" fill="#5e6c7b" stroke="#16191d" stroke-width="0.85" stroke-linejoin="round"/><polygon points="206,284.6 361,349.5 362,356 206.5,291.4" fill="#2f3540" stroke="#16191d" stroke-width="0.85" stroke-linejoin="round"/><polygon points="361,349.5 692.7,286.4 692.7,292.5 362,356" fill="#6b7a8a" stroke="#16191d" stroke-width="0.85" stroke-linejoin="round"/><polygon points="362,429 711,363 711,371 681,377 681,390 362,452" fill="#8c3f4b" stroke="#16191d" stroke-width="0.85" stroke-linejoin="round"/><line x1="362" y1="446" x2="681" y2="384" stroke="#4a1a22" stroke-width="0.8"/><polygon points="315,413 362,429 362,452 315,437" fill="#5a2a32" stroke="#16191d" stroke-width="0.85" stroke-linejoin="round"/><polygon points="418,411 465,402 465,427 418,436" fill="#f4f4f4" stroke="#1a1a1a" stroke-width="1.6"/><line x1="425.8333333333333" y1="409.5" x2="425.8333333333333" y2="434.5" stroke="#1a1a1a" stroke-width="1.4"/><line x1="433.6666666666667" y1="408.0" x2="433.6666666666667" y2="433.0" stroke="#1a1a1a" stroke-width="1.4"/><line x1="441.5" y1="406.5" x2="441.5" y2="431.5" stroke="#1a1a1a" stroke-width="1.4"/><line x1="449.3333333333333" y1="405.0" x2="449.3333333333333" y2="430.0" stroke="#1a1a1a" stroke-width="1.4"/><line x1="457.1666666666667" y1="403.5" x2="457.1666666666667" y2="428.5" stroke="#1a1a1a" stroke-width="1.4"/><line x1="418" y1="418.0" x2="465" y2="409.0" stroke="#222" stroke-width="1"/><line x1="418" y1="433.5" x2="465" y2="424.5" stroke="#222" stroke-width="1"/><polygon points="577,380 623,371 623,392 577,401" fill="#f4f4f4" stroke="#1a1a1a" stroke-width="1.6"/><polygon points="577.0,380.0 581.1818181818181,379.1818181818182 581.1818181818181,384.4318181818182 577.0,385.25" fill="#222"/><polygon points="577.0,390.5 581.1818181818181,389.6818181818182 581.1818181818181,394.9318181818182 577.0,395.75" fill="#222"/><polygon points="577.0,395.75 581.1818181818181,394.9318181818182 581.1818181818181,400.1818181818182 577.0,401.0" fill="#222"/><polygon points="581.1818181818181,379.1818181818182 585.3636363636363,378.3636363636364 585.3636363636363,383.6136363636364 581.1818181818181,384.4318181818182" fill="#222"/><polygon points="585.3636363636364,383.6136363636364 589.5454545454545,382.79545454545456 589.5454545454545,388.04545454545456 585.3636363636364,388.8636363636364" fill="#222"/><polygon points="585.3636363636364,388.8636363636364 589.5454545454545,388.04545454545456 589.5454545454545,393.29545454545456 585.3636363636364,394.1136363636364" fill="#222"/><polygon points="585.3636363636364,394.1136363636364 589.5454545454545,393.29545454545456 589.5454545454545,398.54545454545456 585.3636363636364,399.3636363636364" fill="#222"/><polygon points="589.5454545454545,382.79545454545456 593.7272727272726,381.97727272727275 593.7272727272726,387.22727272727275 589.5454545454545,388.04545454545456" fill="#222"/><polygon points="589.5454545454545,388.04545454545456 593.7272727272726,387.22727272727275 593.7272727272726,392.47727272727275 589.5454545454545,393.29545454545456" fill="#222"/><polygon points="597.9090909090909,386.40909090909093 602.090909090909,385.5909090909091 602.090909090909,390.8409090909091 597.9090909090909,391.65909090909093" fill="#222"/><polygon points="597.9090909090909,391.65909090909093 602.090909090909,390.8409090909091 602.090909090909,396.0909090909091 597.9090909090909,396.90909090909093" fill="#222"/><polygon points="602.0909090909091,385.59090909090907 606.2727272727273,384.77272727272725 606.2727272727273,390.02272727272725 602.0909090909091,390.84090909090907" fill="#222"/><polygon points="606.2727272727273,374.27272727272725 610.4545454545454,373.45454545454544 610.4545454545454,378.70454545454544 606.2727272727273,379.52272727272725" fill="#222"/><polygon points="606.2727272727273,379.52272727272725 610.4545454545454,378.70454545454544 610.4545454545454,383.95454545454544 606.2727272727273,384.77272727272725" fill="#222"/><polygon points="606.2727272727273,390.02272727272725 610.4545454545454,389.20454545454544 610.4545454545454,394.45454545454544 606.2727272727273,395.27272727272725" fill="#222"/><polygon points="610.4545454545455,389.20454545454544 614.6363636363636,388.3863636363636 614.6363636363636,393.6363636363636 610.4545454545455,394.45454545454544" fill="#222"/><polygon points="614.6363636363636,372.6363636363636 618.8181818181818,371.8181818181818 618.8181818181818,377.0681818181818 614.6363636363636,377.8863636363636" fill="#222"/><polygon points="614.6363636363636,377.8863636363636 618.8181818181818,377.0681818181818 618.8181818181818,382.3181818181818 614.6363636363636,383.1363636363636" fill="#222"/><polygon points="614.6363636363636,383.1363636363636 618.8181818181818,382.3181818181818 618.8181818181818,387.5681818181818 614.6363636363636,388.3863636363636" fill="#222"/><polygon points="614.6363636363636,388.3863636363636 618.8181818181818,387.5681818181818 618.8181818181818,392.8181818181818 614.6363636363636,393.6363636363636" fill="#222"/><polygon points="618.8181818181819,382.3181818181818 623.0,381.5 623.0,386.75 618.8181818181819,387.5681818181818" fill="#222"/><polygon points="618.8181818181819,387.5681818181818 623.0,386.75 623.0,392.0 618.8181818181819,392.8181818181818" fill="#222"/><line x1="582.75" y1="378.875" x2="582.75" y2="399.875" stroke="#1a1a1a" stroke-width="1.4"/><line x1="588.5" y1="377.75" x2="588.5" y2="398.75" stroke="#1a1a1a" stroke-width="1.4"/><line x1="594.25" y1="376.625" x2="594.25" y2="397.625" stroke="#1a1a1a" stroke-width="1.4"/><line x1="600.0" y1="375.5" x2="600.0" y2="396.5" stroke="#1a1a1a" stroke-width="1.4"/><line x1="605.75" y1="374.375" x2="605.75" y2="395.375" stroke="#1a1a1a" stroke-width="1.4"/><line x1="611.5" y1="373.25" x2="611.5" y2="394.25" stroke="#1a1a1a" stroke-width="1.4"/><line x1="617.25" y1="372.125" x2="617.25" y2="393.125" stroke="#1a1a1a" stroke-width="1.4"/><line x1="577" y1="386.3" x2="623" y2="377.3" stroke="#222" stroke-width="1"/><line x1="577" y1="391.55" x2="623" y2="382.55" stroke="#222" stroke-width="1"/><line x1="577" y1="396.8" x2="623" y2="387.8" stroke="#222" stroke-width="1"/><polygon points="628,370 678,361 678,382 628,391" fill="#f4f4f4" stroke="#1a1a1a" stroke-width="1.6"/><polygon points="628.0,375.25 632.1666666666666,374.5 632.1666666666666,379.75 628.0,380.5" fill="#222"/><polygon points="628.0,385.75 632.1666666666666,385.0 632.1666666666666,390.25 628.0,391.0" fill="#222"/><polygon points="640.5,383.5 644.6666666666666,382.75 644.6666666666666,388.0 640.5,388.75" fill="#222"/><polygon points="644.6666666666666,382.75 648.8333333333333,382.0 648.8333333333333,387.25 644.6666666666666,388.0" fill="#222"/><polygon points="648.8333333333334,366.25 653.0,365.5 653.0,370.75 648.8333333333334,371.5" fill="#222"/><polygon points="648.8333333333334,382.0 653.0,381.25 653.0,386.5 648.8333333333334,387.25" fill="#222"/><polygon points="653.0,381.25 657.1666666666666,380.5 657.1666666666666,385.75 653.0,386.5" fill="#222"/><polygon points="657.1666666666666,370.0 661.3333333333333,369.25 661.3333333333333,374.5 657.1666666666666,375.25" fill="#222"/><polygon points="657.1666666666666,375.25 661.3333333333333,374.5 661.3333333333333,379.75 657.1666666666666,380.5" fill="#222"/><polygon points="657.1666666666666,380.5 661.3333333333333,379.75 661.3333333333333,385.0 657.1666666666666,385.75" fill="#222"/><polygon points="661.3333333333334,369.25 665.5,368.5 665.5,373.75 661.3333333333334,374.5" fill="#222"/><polygon points="665.5,363.25 669.6666666666666,362.5 669.6666666666666,367.75 665.5,368.5" fill="#222"/><polygon points="665.5,373.75 669.6666666666666,373.0 669.6666666666666,378.25 665.5,379.0" fill="#222"/><polygon points="665.5,379.0 669.6666666666666,378.25 669.6666666666666,383.5 665.5,384.25" fill="#222"/><polygon points="669.6666666666666,367.75 673.8333333333333,367.0 673.8333333333333,372.25 669.6666666666666,373.0" fill="#222"/><polygon points="669.6666666666666,378.25 673.8333333333333,377.5 673.8333333333333,382.75 669.6666666666666,383.5" fill="#222"/><polygon points="673.8333333333334,361.75 678.0,361.0 678.0,366.25 673.8333333333334,367.0" fill="#222"/><polygon points="673.8333333333334,367.0 678.0,366.25 678.0,371.5 673.8333333333334,372.25" fill="#222"/><line x1="633.5555555555555" y1="369.0" x2="633.5555555555555" y2="390.0" stroke="#1a1a1a" stroke-width="1.4"/><line x1="639.1111111111111" y1="368.0" x2="639.1111111111111" y2="389.0" stroke="#1a1a1a" stroke-width="1.4"/><line x1="644.6666666666666" y1="367.0" x2="644.6666666666666" y2="388.0" stroke="#1a1a1a" stroke-width="1.4"/><line x1="650.2222222222222" y1="366.0" x2="650.2222222222222" y2="387.0" stroke="#1a1a1a" stroke-width="1.4"/><line x1="655.7777777777778" y1="365.0" x2="655.7777777777778" y2="386.0" stroke="#1a1a1a" stroke-width="1.4"/><line x1="661.3333333333334" y1="364.0" x2="661.3333333333334" y2="385.0" stroke="#1a1a1a" stroke-width="1.4"/><line x1="666.8888888888889" y1="363.0" x2="666.8888888888889" y2="384.0" stroke="#1a1a1a" stroke-width="1.4"/><line x1="672.4444444444445" y1="362.0" x2="672.4444444444445" y2="383.0" stroke="#1a1a1a" stroke-width="1.4"/><line x1="628" y1="376.3" x2="678" y2="367.3" stroke="#222" stroke-width="1"/><line x1="628" y1="381.55" x2="678" y2="372.55" stroke="#222" stroke-width="1"/><line x1="628" y1="386.8" x2="678" y2="377.8" stroke="#222" stroke-width="1"/><polygon points="362,412.8 681,356.5 681,341.5 690,343 711,355.5 362,421 315,405 330,400" fill="#5e6c7b" stroke="#16191d" stroke-width="0.85" stroke-linejoin="round"/><polygon points="315,405 362,421 362,429 315,413" fill="#2f3540" stroke="#16191d" stroke-width="0.85" stroke-linejoin="round"/><polygon points="362,421 711,355.5 711,363 362,429" fill="#6b7a8a" stroke="#16191d" stroke-width="0.85" stroke-linejoin="round"/><polygon points="290,378 362,412.8 362,430 290,418" fill="#2f3540" stroke="#16191d" stroke-width="0" stroke-linejoin="round"/><polygon points="218,365 283,392 283,402 218,393" fill="#4e242a" stroke="#16191d" stroke-width="0.85" stroke-linejoin="round"/><polygon points="187,351.5 217.5,346 336,401 283,391" fill="#5e6c7b" stroke="#16191d" stroke-width="0.85" stroke-linejoin="round"/><polygon points="187,351.5 283,391 283,397 187,357.5" fill="#2f3540" stroke="#16191d" stroke-width="0.85" stroke-linejoin="round"/><polygon points="315,405 336,401 362,412.8 362,421" fill="#5e6c7b" stroke="#16191d" stroke-width="0.85" stroke-linejoin="round"/><polygon points="312,407 330,402 330,432 312,430" fill="#5a2a32" stroke="#16191d" stroke-width="0.4" stroke-linejoin="round"/><rect x="320" y="413" width="6" height="15" fill="#c87a88" stroke="#333" stroke-width="0.5"/><polygon points="225,426.5 268,442.5 268,445.5 225,429.5" fill="#707070" stroke="#16191d" stroke-width="0.7" stroke-linejoin="round"/><polygon points="252.5,421 300,438 300,441 252.5,424" fill="#707070" stroke="#16191d" stroke-width="0.7" stroke-linejoin="round"/><rect x="227.45" y="410" width="2.6" height="18" fill="#707070" stroke="#1a1a1a" stroke-width="0.7"/><rect x="247.45" y="413" width="2.6" height="22" fill="#707070" stroke="#1a1a1a" stroke-width="0.7"/><rect x="263.09999999999997" y="418" width="2.6" height="25" fill="#707070" stroke="#1a1a1a" stroke-width="0.7"/><rect x="269.7" y="419" width="2.6" height="12" fill="#707070" stroke="#1a1a1a" stroke-width="0.7"/><rect x="273.7" y="419" width="2.6" height="14" fill="#707070" stroke="#1a1a1a" stroke-width="0.7"/><rect x="288.7" y="420" width="2.6" height="19" fill="#707070" stroke="#1a1a1a" stroke-width="0.7"/><rect x="298.7" y="418" width="2.6" height="22" fill="#707070" stroke="#1a1a1a" stroke-width="0.7"/><rect x="316.7" y="414" width="2.6" height="19" fill="#707070" stroke="#1a1a1a" stroke-width="0.7"/><polygon points="220,404 224,403 254,413 252,414.5" fill="#c4c4c4" stroke="#16191d" stroke-width="0.6" stroke-linejoin="round"/><polygon points="220,404 252,414.5 252,418 220,408" fill="#6e6e6e" stroke="#16191d" stroke-width="0.6" stroke-linejoin="round"/><polygon points="218,394 280,381 330,401 266,414" fill="#5e6c7b" stroke="#16191d" stroke-width="0.85" stroke-linejoin="round"/><polygon points="218,394 266,414 266,420.5 218,401" fill="#2f3540" stroke="#16191d" stroke-width="0.85" stroke-linejoin="round"/><polygon points="266,414 330,401 330,407 266,420.5" fill="#6b7a8a" stroke="#16191d" stroke-width="0.85" stroke-linejoin="round"/><polygon points="192.5,431.5 197,430 241,445 239.5,449.5 234,450 192,435.5" fill="#7e7e7e" stroke="#16191d" stroke-width="0.7" stroke-linejoin="round"/><polygon points="204,428 210,426 232,433.5 232,441.5 204,434" fill="#5a5a5a" stroke="#16191d" stroke-width="0.6" stroke-linejoin="round"/></svg>
<svg class="a" style="left:750px;top:116px;" width="34" height="8" viewBox="0 0 34 8"><rect x="1" y="3" width="7" height="3" rx="1.5" fill="#bbb" stroke="#777" stroke-width="0.8"/><rect x="13" y="1" width="6" height="6" rx="1" fill="#eee" stroke="#666" stroke-width="1.2"/><path d="M25 1 L31 7 M31 1 L25 7" stroke="#666" stroke-width="2"/><path d="M25 1 L31 7 M31 1 L25 7" stroke="#eee" stroke-width="0.8"/></svg>
<svg class="a" style="left:680px;top:160px;" width="90" height="56" viewBox="0 0 90 56"><ellipse cx="45" cy="43" rx="40.5" ry="14" fill="none" stroke="#d2d2d2" stroke-width="1.3" stroke-dasharray="6 1.5"/>
<ellipse cx="44" cy="43" rx="32" ry="8" fill="#f0f0f0"/>
<ellipse cx="45" cy="43" rx="35" ry="11" fill="none" stroke="#e2e2e2" stroke-width="0.8"/>
<path d="M8 46 l-4 1 l4 1.5 M83 38 l3 -2 M70 52 l4 2" stroke="#bbb" stroke-width="1" fill="none"/>
<path d="M26 8 L49.5 4.5 L68 10 L42 14Z" fill="#f4f4f4" stroke="#a8a8a8" stroke-width="1"/>
<path d="M26 8 L42 14 L42 44 L26.8 36Z" fill="#e6e6e6" stroke="#a8a8a8" stroke-width="1"/>
<path d="M42 14 L68 10 L67.4 38 L42 44Z" fill="#ececec" stroke="#a8a8a8" stroke-width="1"/>
<text x="55" y="31" font-size="7.5" font-family="Liberation Sans" font-weight="bold" fill="#7a7a7a" text-anchor="middle" transform="rotate(-8 55 31)">FRONT</text>
<text x="34" y="28" font-size="5.5" font-family="Liberation Sans" font-weight="bold" fill="#888" text-anchor="middle" transform="rotate(20 34 28)">LEFT</text>
</svg>
<div class="a" style="left:761px;top:235px;width:22px;height:72px;background:linear-gradient(90deg,#fbfbfb,#f0f0f0);border:1px solid #c4c4c4;border-radius:3px"></div>
<svg class="a" style="left:775px;top:236px;" width="6" height="6" viewBox="0 0 6 6"><circle cx="3" cy="3" r="2" fill="none" stroke="#999" stroke-width="0.9"/></svg>
<svg class="a" style="left:764px;top:246px;" width="17" height="16" viewBox="0 0 17 16"><circle cx="7" cy="7" r="5.8" fill="#f4f4f4" stroke="#9a9a9a" stroke-width="1"/><circle cx="7" cy="7" r="2.8" fill="none" stroke="#9a9a9a" stroke-width="1"/><rect x="9" y="8.5" width="6" height="6.5" rx="1.5" fill="#6aa4e6" stroke="#2a5a9a" stroke-width="0.6"/></svg>
<svg class="a" style="left:769.5px;top:266px;" width="4" height="3" viewBox="0 0 4 3"><path d="M0 0 h4 l-2 2.5z" fill="#555"/></svg>
<div class="a" style="left:764px;top:271px;width:17px;height:1px;background:#dcdcdc"></div>
<svg class="a" style="left:766px;top:276px;" width="13" height="13" viewBox="0 0 13 13"><rect x="1" y="1" width="7" height="7" fill="#9ad49a" stroke="#4a9a4a" stroke-width="0.8"/><circle cx="8" cy="8" r="2.6" fill="#fff" fill-opacity="0.5" stroke="#555" stroke-width="1"/><path d="M10 10 L12.5 12.5" stroke="#555" stroke-width="1.4"/></svg>
<svg class="a" style="left:769.5px;top:292px;" width="4" height="3" viewBox="0 0 4 3"><path d="M0 0 h4 l-2 2.5z" fill="#555"/></svg>
<svg class="a" style="left:775px;top:300px;" width="6" height="6" viewBox="0 0 6 6"><circle cx="3" cy="3" r="2" fill="none" stroke="#999" stroke-width="0.9"/></svg>
<svg class="a" style="left:196px;top:584px;" width="11" height="10" viewBox="0 0 11 10"><rect x="0.5" y="1.5" width="10" height="7" fill="#fff" stroke="#444"/><path d="M0.5 4 H10.5 M0.5 6.5 H10.5 M3 1.5 V8.5 M5.5 1.5 V8.5 M8 1.5 V8.5" stroke="#555" stroke-width="0.6"/></svg>
<svg class="a" style="left:208px;top:584px;" width="11" height="10" viewBox="0 0 11 10"><path d="M1 4 L4 1.5 H10 V7 L7 9 H1Z" fill="#6aaae8" stroke="#1a5aa8"/><path d="M1 4 H7 L10 1.5 M7 4 V9" stroke="#1a5aa8" fill="none"/></svg>
<svg class="a" style="left:221px;top:584px;" width="11" height="10" viewBox="0 0 11 10"><circle cx="4.5" cy="4" r="3" fill="#f4d040" stroke="#a07a10" stroke-width="0.7"/><path d="M6 6 L10 10 M10 6 L6 10" stroke="#e02020" stroke-width="1.4"/></svg>
<svg class="a" style="left:235px;top:584px;" width="11" height="10" viewBox="0 0 11 10"><circle cx="4" cy="4" r="3" fill="none" stroke="#335" stroke-width="1"/><path d="M6 6 L10 10 M10 6 L6 10" stroke="#e02020" stroke-width="1.4"/></svg>
<svg class="a" style="left:248px;top:584px;" width="11" height="10" viewBox="0 0 11 10"><path d="M1 6 Q1 2 4 3 Q6 0 8 3 Q11 3 10 6Z" fill="#fff" stroke="#446" stroke-width="0.9"/><rect x="6" y="5" width="4" height="4" fill="#9ac0e8" stroke="#446" stroke-width="0.6"/></svg>
<svg class="a" style="left:261px;top:584px;" width="11" height="10" viewBox="0 0 11 10"><path d="M1 6 Q1 2 4 3 Q6 0 8 3 Q11 3 10 6Z" fill="#6a9ad0" stroke="#335" stroke-width="0.9"/><path d="M6 5 L10 9 M10 5 L6 9" stroke="#e02020" stroke-width="1.4"/></svg>
<svg class="a" style="left:273px;top:584px;" width="11" height="10" viewBox="0 0 11 10"><path d="M1 7 Q1 3 4 4 Q6 1 8 4 Q11 4 10 7Z" fill="#6a9ad0" stroke="#335" stroke-width="0.9"/></svg>
<svg class="a" style="left:286px;top:584px;" width="11" height="10" viewBox="0 0 11 10"><path d="M1 5 L5.5 1 L10 5 V9 H1Z" fill="#fff" stroke="#333" stroke-width="1"/><rect x="4" y="5" width="3" height="4" fill="#555"/></svg>
<svg class="a" style="left:300px;top:584px;" width="11" height="10" viewBox="0 0 11 10"><path d="M1 5 Q5 1 10 5" stroke="#333" fill="none"/><circle cx="4" cy="6" r="2" fill="none" stroke="#333"/></svg>
<svg class="a" style="left:314px;top:584px;" width="11" height="10" viewBox="0 0 11 10"><circle cx="5" cy="4" r="2" fill="#5a9ae0"/><path d="M5 5 V9" stroke="#2a5a9a"/></svg>
<svg class="a" style="left:325px;top:584px;" width="11" height="10" viewBox="0 0 11 10"><rect x="1" y="2" width="7" height="6" fill="#fff" stroke="#333" stroke-width="1.1"/><circle cx="8" cy="7" r="2" fill="#888"/></svg>
<svg class="a" style="left:337px;top:584px;" width="11" height="10" viewBox="0 0 11 10"><rect x="1" y="2" width="7" height="6" fill="#d06060" stroke="#333" stroke-width="1.1"/><circle cx="8" cy="6" r="2.4" fill="#5a7ab0"/></svg>
<svg class="a" style="left:350px;top:584px;" width="11" height="10" viewBox="0 0 11 10"><rect x="1" y="3" width="8" height="6" fill="#fff" stroke="#333" stroke-width="1.1"/><path d="M3 3 V1.5 H7 V3" stroke="#333" fill="none"/></svg>
<svg class="a" style="left:362px;top:584px;" width="11" height="10" viewBox="0 0 11 10"><rect x="1.5" y="1.5" width="8" height="7" fill="#fff" stroke="#333" stroke-dasharray="2 1"/><rect x="0" y="0" width="3" height="3" fill="#333"/><rect x="8" y="0" width="3" height="3" fill="#333"/></svg>
<svg class="a" style="left:380px;top:587px;" width="3" height="5" viewBox="0 0 3 5"><path d="M3 0 L0 2.5 L3 5z" fill="#222"/></svg>
<div class="a" style="left:5px;top:595px;width:789px;height:14px;background:linear-gradient(180deg,#f4f4f4,#e6e6e6)"></div>
<div class="a" style="left:5px;top:595px;width:789px;height:1px;background:#a4a4a4"></div>
<div class="t" style="left:6px;top:599px;font-size:7.15px;color:#1e1e1e">Click to select, TAB for alternates, CTRL adds, SHIFT unselects</div>
<svg class="a" style="left:212px;top:596px;" width="11" height="12" viewBox="0 0 11 12"><circle cx="4" cy="4" r="3" fill="none" stroke="#2a6a3a" stroke-width="1.3"/><rect x="2" y="5" width="4" height="6" rx="1" fill="#6aaae0" stroke="#1a4a9a" stroke-width="0.8"/><rect x="6" y="5" width="4" height="6" rx="1" fill="#6aaae0" stroke="#1a4a9a" stroke-width="0.8"/></svg>
<div class="a" style="left:226px;top:597px;width:125px;height:11px;background:#fff;border:1px solid #e2e2e2"></div>
<svg class="a" style="left:343px;top:601px;" width="4" height="3" viewBox="0 0 4 3"><path d="M0 0 h4 l-2 2.5z" fill="#888"/></svg>
<svg class="a" style="left:353px;top:597px;" width="12" height="11" viewBox="0 0 12 11"><path d="M2 10 L8 2" stroke="#b8b8b8" stroke-width="2"/><circle cx="8" cy="3" r="2.4" fill="none" stroke="#aaa" stroke-width="1"/></svg>
<div class="t" style="left:364px;top:600px;font-size:7.6px;color:#222;font-weight:bold">:0</div>
<div class="a" style="left:392px;top:597px;width:12px;height:11px;background:#f8f8f8;border:1px solid #555;border-radius:1px"></div>
<div class="a" style="left:394px;top:600px;width:8px;height:1px;background:#555"></div>
<div class="a" style="left:394px;top:602px;width:2px;height:4px;background:#555"></div>
<div class="a" style="left:408px;top:597px;width:11px;height:11px;background:#c8c8c8;border:1px solid #aaa"></div>
<div class="a" style="left:423px;top:597px;width:97px;height:11px;background:#fafafa;border:1px solid #e0e0e0"></div>
<div class="t" style="left:427px;top:600px;font-size:7.6px;color:#8a8a8a">Main Model</div>
<svg class="a" style="left:513px;top:601px;" width="4" height="3" viewBox="0 0 4 3"><path d="M0 0 h4 l-2 2.5z" fill="#888"/></svg>
<svg class="a" style="left:660px;top:596px;" width="12" height="12" viewBox="0 0 12 12"><ellipse cx="6" cy="3.5" rx="5" ry="2.4" fill="#f0d040" stroke="#806010" stroke-width="0.8"/><path d="M4 6 L4 11 L8 9" stroke="#333" fill="none"/></svg>
<svg class="a" style="left:679px;top:596px;" width="13" height="12" viewBox="0 0 13 12"><path d="M1 7 L6 3 L10 7 V11 H1Z" fill="#fff" stroke="#2a5aa0" stroke-width="1"/><path d="M7 1 L11 5 M11 1 L7 5" stroke="#e02020" stroke-width="1.4"/></svg>
<svg class="a" style="left:698px;top:596px;" width="12" height="12" viewBox="0 0 12 12"><rect x="2" y="1" width="7" height="5" rx="1" fill="#f0b070" stroke="#a05010" stroke-width="0.8"/><path d="M5 6 V11 M7 8 L10 11" stroke="#333"/></svg>
<svg class="a" style="left:717px;top:596px;" width="12" height="12" viewBox="0 0 12 12"><path d="M1 2 L8 4 L8 11 L1 9Z" fill="#cfe0f4" stroke="#2a5aa0" stroke-width="1"/><path d="M7 1 L11 5 M11 1 L7 5" stroke="#e02020" stroke-width="1.4"/></svg>
<svg class="a" style="left:736px;top:596px;" width="13" height="12" viewBox="0 0 13 12"><path d="M1 5 H6 M3.5 2.5 V7.5" stroke="#222" stroke-width="1.6"/><path d="M7 1 L11 5 M11 1 L7 5" stroke="#e02020" stroke-width="1.4"/><path d="M6 8 L9 11 L11 8" stroke="#2a5a9a" stroke-width="1.2" fill="none"/></svg>
<svg class="a" style="left:755px;top:596px;" width="12" height="12" viewBox="0 0 12 12"><path d="M1 1 H11 L7 6 V11 L5 10 V6Z" fill="#fff" stroke="#555" stroke-width="1.1"/></svg>
<div class="t" style="left:765px;top:601px;font-size:7.5px;color:#222;font-weight:bold">:0</div>
</body></html>
